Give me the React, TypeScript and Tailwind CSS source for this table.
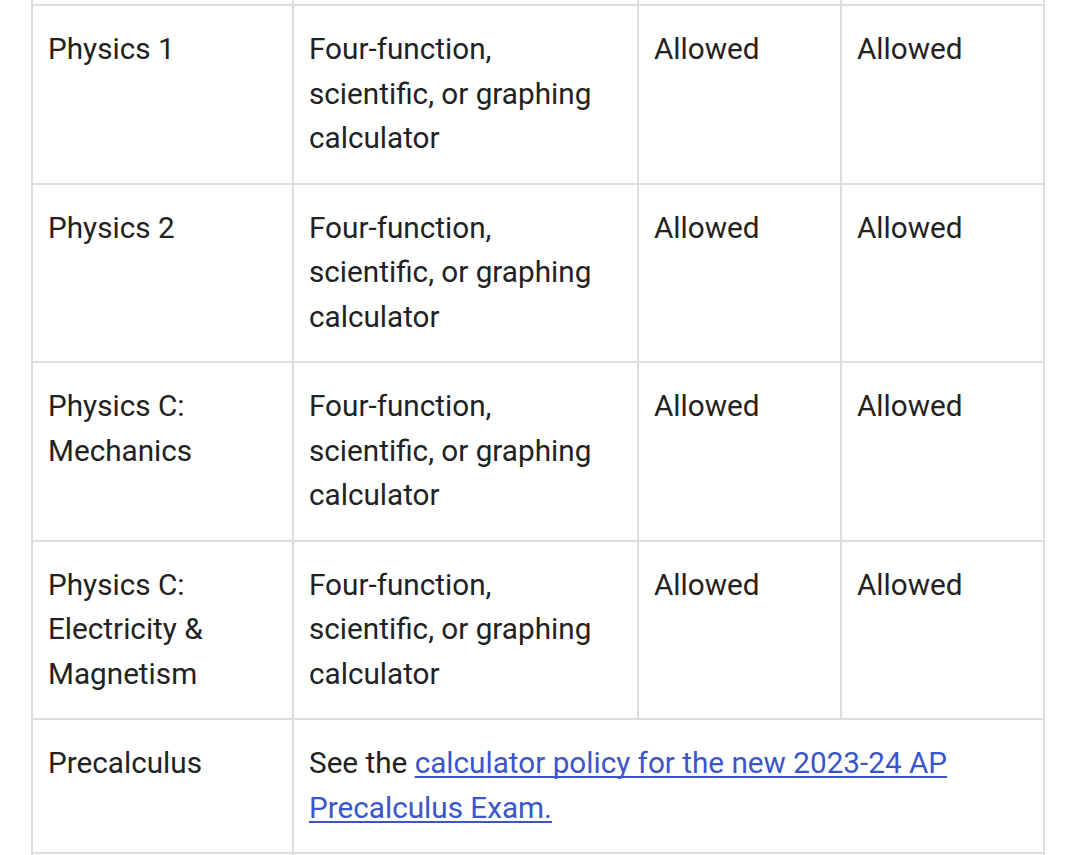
const rows = [
  { exam: ["Physics 1"], calc: true },
  { exam: ["Physics 2"], calc: true },
  { exam: ["Physics C:", "Mechanics"], calc: true },
  { exam: ["Physics C:", "Electricity &", "Magnetism"], calc: true },
];

const cell = "border-2 border-[#dddddd] align-top pl-[15px] pr-[24px] pt-[21px] pb-[22px]";

export default function App() {
  return (
    <div
      className="bg-white h-screen overflow-hidden text-[#222222] text-[29.7px] leading-[44.5px]"
      style={{ fontFamily: "Roboto, 'Liberation Sans', sans-serif" }}
    >
      <table className="ml-[31px] w-[1012px] border-collapse table-fixed">
        <colgroup>
          <col className="w-[261px]" />
          <col className="w-[345px]" />
          <col className="w-[203px]" />
          <col className="w-[203px]" />
        </colgroup>
        <tbody>
          <tr className="h-[5px]">
            <td className="border-2 border-t-0 border-[#dddddd] p-0" />
            <td className="border-2 border-t-0 border-[#dddddd] p-0" />
            <td className="border-2 border-t-0 border-[#dddddd] p-0" />
            <td className="border-2 border-t-0 border-[#dddddd] p-0" />
          </tr>
          {rows.map((r) => (
            <tr key={r.exam.join(" ")}>
              <td className={cell}>
                {r.exam.map((l) => (
                  <div key={l}>{l}</div>
                ))}
              </td>
              <td className={cell}>
                Four-function, scientific, or graphing calculator
              </td>
              <td className={cell}>Allowed</td>
              <td className={cell}>Allowed</td>
            </tr>
          ))}
          <tr>
            <td className={cell}>Precalculus</td>
            <td className={cell} colSpan={3}>
              See the{" "}
              <a
                href="#"
                className="text-[#3a56c8] underline decoration-2 underline-offset-[3px] [text-decoration-skip-ink:none]"
              >
                calculator policy for the new 2023-24 AP Precalculus Exam.
              </a>
            </td>
          </tr>
          <tr className="h-[200px]">
            <td className={cell}>&nbsp;</td>
            <td className={cell} colSpan={3}>&nbsp;</td>
          </tr>
        </tbody>
      </table>
    </div>
  );
}
